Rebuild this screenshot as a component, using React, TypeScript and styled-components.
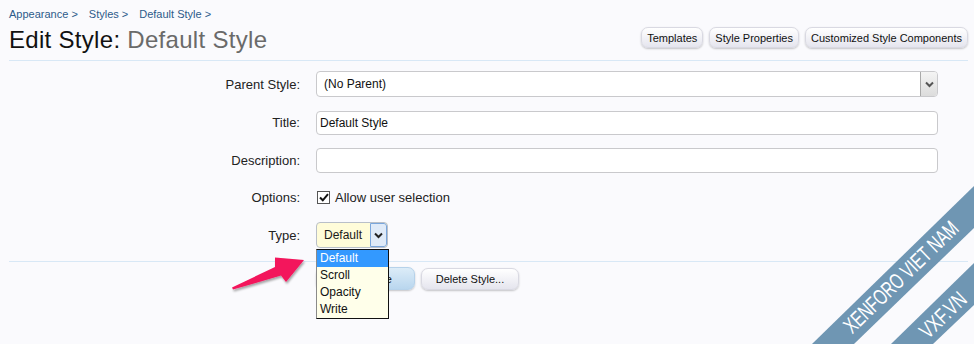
import styled, { createGlobalStyle } from "styled-components";

const GlobalStyle = createGlobalStyle`
  html, body {
    margin: 0;
    padding: 0;
    background: #fafafd;
  }
  body {
    font-family: "Liberation Sans", Arial, sans-serif;
    color: #1a1a1a;
  }
`;

const Page = styled.div`
  position: relative;
  width: 974px;
  height: 344px;
  overflow: hidden;
  padding: 0 6px 0 9px;
  box-sizing: border-box;
  background: #fafafd;
`;

const Breadcrumb = styled.div`
  display: flex;
  gap: 11px;
  padding-top: 7px;
  font-size: 11px;
  line-height: 14px;
  a {
    color: #2d5b8a;
    text-decoration: none;
  }
`;

const TitleRow = styled.div`
  display: flex;
  justify-content: space-between;
  align-items: flex-start;
  margin-top: 4px;
  height: 30px;
`;

const Title = styled.h1`
  margin: 0;
  font-size: 24px;
  font-weight: normal;
  letter-spacing: 0.3px;
  line-height: 30px;
  color: #111;
  span {
    color: #6a6a6a;
  }
`;

const HeaderButtons = styled.div`
  display: flex;
  gap: 6px;
  margin-top: 2px;
`;

const Button = styled.button<{ $primary?: boolean; $h?: number }>`
  height: ${(p) => p.$h ?? 21}px;
  padding: 0 5px;
  font-family: "Liberation Sans", Arial, sans-serif;
  font-size: 11px;
  color: #111;
  border: 1px solid ${(p) => (p.$primary ? "#b6d2ea" : "#d9d9e2")};
  border-radius: 7px;
  background: ${(p) =>
    p.$primary
      ? "linear-gradient(#dcecf8, #b9d6ee)"
      : "linear-gradient(#ffffff, #e5e5ee)"};
  box-shadow: 0 1px 2px rgba(0, 0, 0, 0.22);
  cursor: pointer;
`;

const Rule = styled.div<{ $top: number }>`
  height: 1px;
  background: #d8e8f6;
  margin-top: ${(p) => p.$top}px;
`;

const Form = styled.div`
  display: flex;
  flex-direction: column;
  gap: 13px;
  padding: 10px 0 13px;
`;

const Row = styled.div<{ $h: number }>`
  display: grid;
  grid-template-columns: 291px 622px;
  column-gap: 16px;
  align-items: center;
  height: ${(p) => p.$h}px;
`;

const Label = styled.div`
  text-align: right;
  font-size: 13px;
  color: #222;
`;

const Field = styled.div<{ $h: number }>`
  position: relative;
  display: flex;
  align-items: center;
  height: ${(p) => p.$h}px;
  width: 100%;
  box-sizing: border-box;
  border: 1px solid #c9c9cc;
  border-radius: 4px;
  background: #fff;
  font-size: 12px;
  color: #111;
`;

const FieldText = styled.span<{ $pad: number }>`
  flex: 1;
  align-self: center;
  padding-left: ${(p) => p.$pad}px;
`;

const SelectArrow = styled.span`
  display: flex;
  align-items: center;
  justify-content: center;
  width: 17px;
  height: 100%;
  box-sizing: border-box;
  border-left: 1px solid #a9a9a9;
  background: linear-gradient(#f4f4f4, #dcdcdc);
  border-radius: 0 3px 3px 0;
`;

const CheckRow = styled.label`
  display: flex;
  align-items: center;
  gap: 5px;
  font-size: 13px;
  color: #222;
`;

const CheckBox = styled.span`
  display: flex;
  align-items: center;
  justify-content: center;
  width: 13px;
  height: 13px;
  margin-left: 1px;
  box-sizing: border-box;
  border: 1px solid #555;
  background: #fff;
`;

const TypeWrap = styled.div`
  position: relative;
  width: 72px;
`;

const TypeSelect = styled.div`
  display: flex;
  height: 26px;
  box-sizing: border-box;
  border: 1px solid #b9bfc8;
  border-radius: 4px;
  background: #fffcd9;
  font-size: 12px;
  overflow: hidden;
`;

const TypeArrow = styled.span`
  display: flex;
  align-items: center;
  justify-content: center;
  width: 17px;
  box-sizing: border-box;
  border: 1px solid #7aa6dc;
  border-radius: 0 3px 3px 0;
  background: #dfeaf8;
`;

const DropList = styled.ul`
  position: absolute;
  top: 27px;
  left: 0;
  z-index: 3;
  width: 73px;
  margin: 0;
  padding: 0;
  list-style: none;
  box-sizing: border-box;
  border: 1px solid #111;
  border-left-color: #8a8a8a;
  background: #ffffea;
  font-size: 12px;
`;

const DropItem = styled.li<{ $active?: boolean }>`
  height: 17px;
  line-height: 17px;
  padding-left: 3px;
  color: ${(p) => (p.$active ? "#fff" : "#111")};
  background: ${(p) => (p.$active ? "#3399ff" : "transparent")};
`;

const Actions = styled.div`
  display: flex;
  gap: 6px;
  margin-top: 5px;
  padding-left: 307px;
  align-items: flex-start;
`;

const Arrow = styled.svg`
  position: absolute;
  left: 225px;
  top: 248px;
  z-index: 4;
  overflow: visible;
`;

const Watermark = styled.svg`
  position: absolute;
  right: 0;
  bottom: 0;
  z-index: 5;
`;

const Chevron = ({ color = "#444" }: { color?: string }) => (
  <svg width="9" height="7" viewBox="0 0 9 7">
    <path d="M1 1.5 L4.5 5 L8 1.5" fill="none" stroke={color} strokeWidth="2" />
  </svg>
);

const types = ["Default", "Scroll", "Opacity", "Write"];

export default function App() {
  return (
    <>
      <GlobalStyle />
      <Page>
        <Breadcrumb>
          <a href="#">Appearance &gt;</a>
          <a href="#">Styles &gt;</a>
          <a href="#">Default Style &gt;</a>
        </Breadcrumb>
        <TitleRow>
          <Title>
            Edit Style: <span>Default Style</span>
          </Title>
          <HeaderButtons>
            <Button>Templates</Button>
            <Button>Style Properties</Button>
            <Button>Customized Style Components</Button>
          </HeaderButtons>
        </TitleRow>
        <Rule $top={5} />

        <Form>
          <Row $h={26}>
            <Label>Parent Style:</Label>
            <Field $h={26}>
              <FieldText $pad={7}>(No Parent)</FieldText>
              <SelectArrow>
                <Chevron color="#555" />
              </SelectArrow>
            </Field>
          </Row>
          <Row $h={25}>
            <Label>Title:</Label>
            <Field $h={24}>
              <FieldText $pad={3}>Default Style</FieldText>
            </Field>
          </Row>
          <Row $h={24}>
            <Label>Description:</Label>
            <Field $h={25} />
          </Row>
          <Row $h={24}>
            <Label>Options:</Label>
            <CheckRow>
              <CheckBox>
                <svg width="10" height="9" viewBox="0 0 10 9">
                  <path d="M1 4.5 L3.8 7.3 L9 1.2" fill="none" stroke="#111" strokeWidth="2" />
                </svg>
              </CheckBox>
              Allow user selection
            </CheckRow>
          </Row>
          <Row $h={26}>
            <Label>Type:</Label>
            <TypeWrap>
              <TypeSelect>
                <FieldText $pad={7}>Default</FieldText>
                <TypeArrow>
                  <Chevron color="#222" />
                </TypeArrow>
              </TypeSelect>
              <DropList>
                {types.map((t, i) => (
                  <DropItem key={t} $active={i === 0}>
                    {t}
                  </DropItem>
                ))}
              </DropList>
            </TypeWrap>
          </Row>
        </Form>
        <Rule $top={0} />

        <Actions>
          <Button $primary $h={23} style={{ width: 99 }}>
            Save Style
          </Button>
          <Button $h={22} style={{ width: 98, marginTop: 1 }}>
            Delete Style...
          </Button>
        </Actions>

        <Arrow width="85" height="45" viewBox="0 0 85 45">
          <defs>
            <filter id="shadow" x="-20%" y="-20%" width="140%" height="160%">
              <feDropShadow dx="1" dy="2" stdDeviation="1.2" floodColor="#000" floodOpacity="0.35" />
            </filter>
          </defs>
          <path
            d="M7 39.5 L50 19 L50 9.5 L79 12 L61 34 L56 27.5 L8 41.5 Z"
            fill="#f3145b"
            filter="url(#shadow)"
          />
        </Arrow>

        <Watermark width="174" height="164" viewBox="0 0 174 164">
          <polygon points="12,164 174,6 174,48 54,164" fill="#6f96b3" />
          <polygon points="91,164 174,83 174,125 133,164" fill="#6f96b3" />
          <text
            x="101"
            y="97"
            fill="#fff"
            fontFamily="'Liberation Sans', Arial, sans-serif"
            fontSize="22"
            textAnchor="middle"
            dominantBaseline="central"
            textLength="150"
            lengthAdjust="spacingAndGlyphs"
            transform="rotate(-44 101 97)"
          >
            XENFORO VIET NAM
          </text>
          <text
            x="143"
            y="135"
            fill="#fff"
            fontFamily="'Liberation Sans', Arial, sans-serif"
            fontSize="22"
            textAnchor="middle"
            dominantBaseline="central"
            textLength="56"
            lengthAdjust="spacingAndGlyphs"
            transform="rotate(-44 143 135)"
          >
            VXF.VN
          </text>
        </Watermark>
      </Page>
    </>
  );
}
